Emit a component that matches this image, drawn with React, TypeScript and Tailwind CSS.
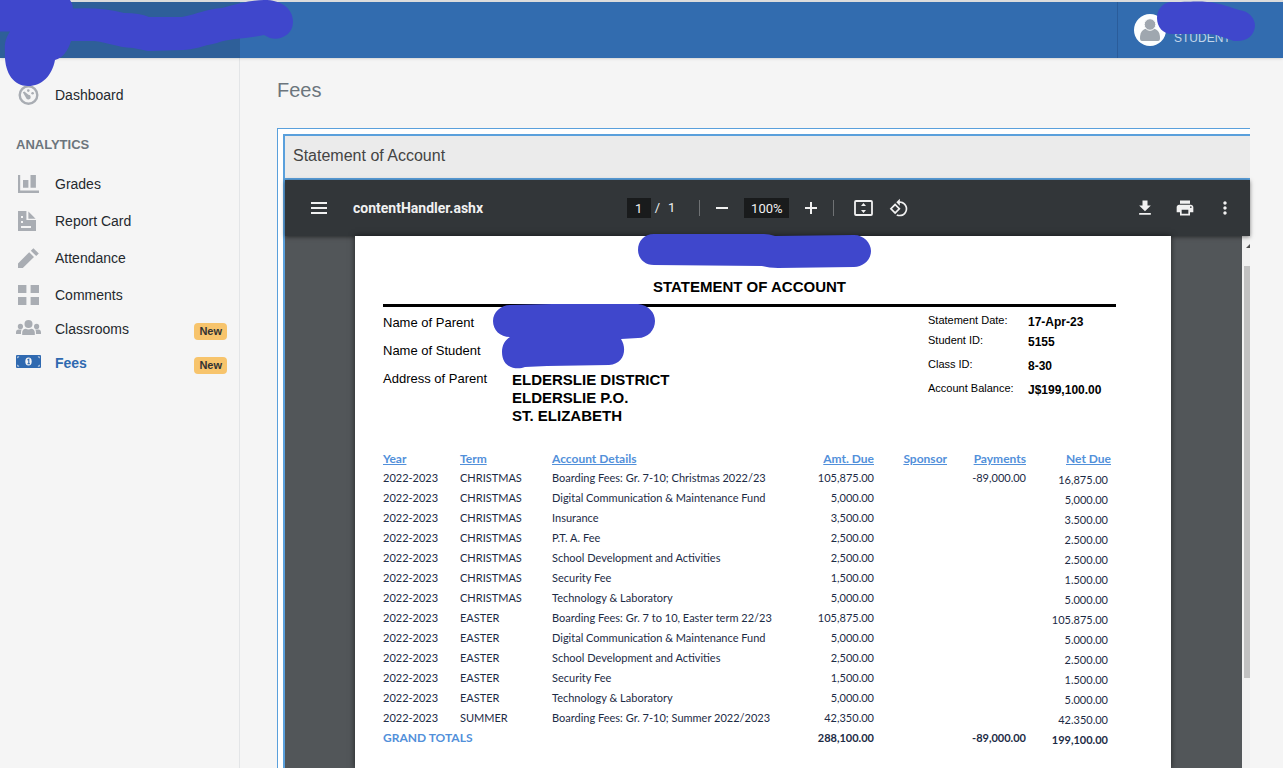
import type { ReactNode } from "react";

const navItems = [
  { label: "Grades", icon: <GradesIcon /> },
  { label: "Report Card", icon: <ReportIcon /> },
  { label: "Attendance", icon: <PencilIcon /> },
  { label: "Comments", icon: <GridIcon /> },
];

const fees = [
  ["2022-2023", "CHRISTMAS", "Boarding Fees: Gr. 7-10; Christmas 2022/23", "105,875.00", "-89,000.00", "16,875.00"],
  ["2022-2023", "CHRISTMAS", "Digital Communication & Maintenance Fund", "5,000.00", "", "5,000.00"],
  ["2022-2023", "CHRISTMAS", "Insurance", "3,500.00", "", "3.500.00"],
  ["2022-2023", "CHRISTMAS", "P.T. A. Fee", "2,500.00", "", "2.500.00"],
  ["2022-2023", "CHRISTMAS", "School Development and Activities", "2,500.00", "", "2.500.00"],
  ["2022-2023", "CHRISTMAS", "Security Fee", "1,500.00", "", "1.500.00"],
  ["2022-2023", "CHRISTMAS", "Technology & Laboratory", "5,000.00", "", "5.000.00"],
  ["2022-2023", "EASTER", "Boarding Fees: Gr. 7 to 10, Easter term 22/23", "105,875.00", "", "105.875.00"],
  ["2022-2023", "EASTER", "Digital Communication & Maintenance Fund", "5,000.00", "", "5.000.00"],
  ["2022-2023", "EASTER", "School Development and Activities", "2,500.00", "", "2.500.00"],
  ["2022-2023", "EASTER", "Security Fee", "1,500.00", "", "1.500.00"],
  ["2022-2023", "EASTER", "Technology & Laboratory", "5,000.00", "", "5.000.00"],
  ["2022-2023", "SUMMER", "Boarding Fees: Gr. 7-10; Summer 2022/2023", "42,350.00", "", "42.350.00"],
];

function DashboardIcon() {
  return (
    <svg width="21" height="20" viewBox="0 0 21 20" fill="#a9adb3">
      <circle cx="10.5" cy="10" r="8.8" fill="none" stroke="#a9adb3" strokeWidth="2.4" />
      <circle cx="10.3" cy="5.6" r="1.3" />
      <circle cx="14.6" cy="8.2" r="1.3" />
      <path d="M4.8 7.2l1.6-.8 4 3.400a2.400 2.400 0 1 1-2.400 3z" />
    </svg>
  );
}

function GradesIcon() {
  return (
    <svg width="21" height="18" viewBox="0 0 21 18" fill="#a9adb3">
      <path d="M0 0h2.2v15.6H21V18H0zM5 5h5.4v7.8H5zM12.5 0h5.4v12.8h-5.4z" />
    </svg>
  );
}

function ReportIcon() {
  return (
    <svg width="18" height="20" viewBox="0 0 18 20" fill="#a9adb3" fillRule="evenodd">
      <path d="M0 0h8.4v9H18v11H0zM3 5h2v2H3zM3 10h2v2H3zM3 15h10v2H3z" />
      <path d="M10.4.6L17.6 7.8h-7.2z" />
    </svg>
  );
}

function PencilIcon() {
  return (
    <svg width="21" height="20" viewBox="0 0 21 20" fill="#a9adb3">
      <path d="M0 20v-4.6L11.2 4.2l4.8 4.8L4.8 20zM12.8 2.8L15.4.2l5.4 5.2-2.6 2.6z" />
    </svg>
  );
}

function GridIcon() {
  return (
    <svg width="21" height="20" viewBox="0 0 21 20" fill="#a9adb3">
      <path d="M0 0h8.4v8H0zM12.6 0H21v8h-8.4zM0 12h8.4v8H0zM12.6 12H21v8h-8.4z" />
    </svg>
  );
}

function UsersIcon() {
  return (
    <svg width="25" height="15" viewBox="0 0 25 15" fill="#a9adb3">
      <circle cx="12.5" cy="4" r="4" />
      <circle cx="4.4" cy="6.4" r="2.6" />
      <circle cx="20.6" cy="6.4" r="2.6" />
      <path d="M6.2 15v-2.4c0-2.3 1.6-3.8 3.6-3.8 1.6 1 3.8 1 5.4 0 2 0 3.6 1.5 3.6 3.8V15z" />
      <path d="M0 14v-1.6c0-1.6 1-2.8 2.6-2.8h3.2C5 10.6 5 12 5 14zM25 14v-1.6c0-1.6-1-2.8-2.6-2.8h-3.2c.8 1 .8 2.400.8 4.400z" />
    </svg>
  );
}

function MoneyIcon() {
  return (
    <svg width="25" height="13" viewBox="0 0 25 13">
      <rect width="25" height="13" rx="1" fill="#2f69b0" />
      <path d="M1.4 1.4h2l-2 2zM23.6 1.4h-2l2 2zM1.4 11.6h2l-2-2zM23.6 11.6h-2l2-2z" fill="#f5f5f5" />
      <ellipse cx="12.5" cy="6.5" rx="3.2" ry="3.9" fill="#f5f5f5" />
      <path d="M11.4 5l1.400-.8v4.400M11.400 8.800h2.600" fill="none" stroke="#2f69b0" strokeWidth="1.1" />
    </svg>
  );
}

function NavRow({ icon, label, badge, active }: { icon: ReactNode; label: string; badge?: boolean; active?: boolean }) {
  return (
    <a href="#" className={`flex items-center pr-3 ${badge ? "h-[34px] pb-0.5 pl-4" : "h-[37px] pl-[18px]"}`}>
      <span className={badge ? "w-[39px] pb-1" : "w-[37px]"}>{icon}</span>
      <span className={`text-sm ${active ? "font-bold text-[#2f69b0]" : "text-[#24292e]"}`}>{label}</span>
      {badge && (
        <span className="mt-1 ml-auto rounded bg-[#f7c46c] px-[5px] text-[11px] leading-[17px] font-bold text-[#333]">New</span>
      )}
    </a>
  );
}

function Header() {
  return (
    <header className="relative z-20 flex h-[58px] border-t-2 border-[#dcdcdc] bg-[#326caf] shadow">
      <div className="w-60 bg-[#2e5f99]" />
      <svg className="absolute -top-0.5 left-0" width="300" height="88" viewBox="0 0 300 88" fill="#3f47cc">
        <path d="M0 0H70Q73 4 73 8.500Q103 7 124 13Q140 13 149 17H182C198 14 206 9 222 8C238 3 253 0 264 0C281 0 293 8 293 22C293 34 281 41 270 38L264 35C246 39 230 38 217 43C202 46 193 50 183 50L148 51L133 48C115 47 107 42 94 41H71Q66 57 55 60C52 76 42 86 28 86C13 86 4 72 5 52C4 42 7 36 10 31.500H0z" />
      </svg>
      <div className="ml-auto flex w-[166px] items-center border-l border-[#2a5c9a] pl-4">
        <svg width="32" height="32" viewBox="0 0 32 32">
          <circle cx="16" cy="16" r="16" fill="#fcfefe" />
          <path d="M6 24c0-5 2-8 5-9h10c3 1 5 4 5 9 0 2-.5 3-2 3H8c-1.500 0-2-1-2-3z" fill="#9fa7af" />
          <circle cx="16" cy="10.500" r="5.800" fill="#9fa7af" stroke="#fcfefe" />
        </svg>
        <span className="mt-4 ml-2 text-xs font-medium text-[#c3d5ea]">STUDENT</span>
      </div>
      <svg className="absolute -top-0.5 right-7" width="98" height="42" viewBox="0 0 98 42" fill="#3f47cc">
        <path d="M15 2C35 2 40 1 50 2C65 3 74 8 82 10C92 11 98 18 98 26C97 36 90 42 77 41L59 35C55 34 52 34 47 34H15C6 34 0 27 0 18C0 9 6 2 15 2z" />
      </svg>
    </header>
  );
}

function Sidebar() {
  return (
    <nav className="w-60 shrink-0 border-r border-[#e3e5e7] pt-[18px]">
      <NavRow icon={<DashboardIcon />} label="Dashboard" />
      <h2 className="mt-5 mb-2 pl-4 text-[13px] leading-6 font-bold text-[#6c757d]">ANALYTICS</h2>
      {navItems.map((item) => (
        <NavRow key={item.label} icon={item.icon} label={item.label} />
      ))}
      <NavRow icon={<UsersIcon />} label="Classrooms" badge />
      <NavRow icon={<MoneyIcon />} label="Fees" badge active />
    </nav>
  );
}

function PdfToolbar() {
  return (
    <div className="relative z-10 flex h-14 shrink-0 items-center bg-[#323639] font-[Roboto,sans-serif] text-sm text-[#f1f1f1] shadow-[0_1px_4px_rgba(0,0,0,0.5)]">
      <div className="flex flex-1 items-center gap-[26px] pl-[26px]">
        <button aria-label="Menu">
          <svg width="16" height="12" viewBox="0 0 16 12" fill="#f1f1f1">
            <path d="M0 0h16v2H0zM0 5h16v2H0zM0 10h16v2H0z" />
          </svg>
        </button>
        <span className="font-bold">contentHandler.ashx</span>
      </div>
      <div className="flex items-center pr-2.5 text-[13px]">
        <input aria-label="Page number" defaultValue="1" className="h-5 w-6 bg-[#191b1c] text-center" />
        <span className="ml-1">/</span>
        <span className="ml-2">1</span>
        <span className="ml-6 h-4 w-px bg-[#6f7274]" />
        <button aria-label="Zoom out" className="ml-4">
          <svg width="12" height="12" viewBox="0 0 12 12" fill="#f1f1f1">
            <path d="M0 5h12v2H0z" />
          </svg>
        </button>
        <input aria-label="Zoom" defaultValue="100%" className="ml-4 h-5 w-[45px] bg-[#191b1c] text-center" />
        <button aria-label="Zoom in" className="ml-4">
          <svg width="12" height="12" viewBox="0 0 12 12" fill="#f1f1f1">
            <path d="M5 0h2v5h5v2H7v5H5V7H0V5h5z" />
          </svg>
        </button>
        <span className="ml-4 h-4 w-px bg-[#6f7274]" />
        <button aria-label="Fit to page" className="ml-5">
          <svg width="19" height="16" viewBox="0 0 19 16" fill="#f1f1f1">
            <rect x="1" y="1" width="17" height="14" rx="1" fill="none" stroke="#f1f1f1" strokeWidth="1.8" />
            <path d="M9.500 3L12 6H7zM9.500 13L12 10H7z" />
          </svg>
        </button>
        <button aria-label="Rotate" className="ml-4">
          <svg width="20" height="20" viewBox="0 0 24 24" fill="#f1f1f1">
            <path d="M7.340 6.410L.860 12.900l6.490 6.480 6.490-6.480-6.500-6.490zM3.690 12.900l3.660-3.660L11 12.900l-3.660 3.660-3.650-3.660zm15.670-6.260C17.610 4.880 15.300 4 13 4V.760L8.760 5 13 9.240V6c1.790 0 3.580.680 4.950 2.050 2.730 2.730 2.730 7.170 0 9.900C16.580 19.320 14.790 20 13 20c-.970 0-1.940-.210-2.840-.610l-1.490 1.490C10.020 21.620 11.510 22 13 22c2.300 0 4.610-.880 6.360-2.640 3.520-3.510 3.520-9.210 0-12.720z" />
          </svg>
        </button>
      </div>
      <div className="flex flex-1 items-center justify-end gap-5 pr-[15px]">
        <button aria-label="Download">
          <svg width="20" height="20" viewBox="0 0 24 24" fill="#f1f1f1">
            <path d="M19 9h-4V3H9v6H5l7 7 7-7zM5 18v2h14v-2H5z" />
          </svg>
        </button>
        <button aria-label="Print">
          <svg width="20" height="20" viewBox="0 0 24 24" fill="#f1f1f1">
            <path d="M19 8H5c-1.660 0-3 1.340-3 3v6h4v4h12v-4h4v-6c0-1.660-1.340-3-3-3zm-3 11H8v-5h8v5zm3-7c-.550 0-1-.450-1-1s.450-1 1-1 1 .450 1 1-.450 1-1 1zm-1-9H6v4h12V3z" />
          </svg>
        </button>
        <button aria-label="More actions">
          <svg width="20" height="20" viewBox="0 0 24 24" fill="#f1f1f1">
            <path d="M12 8c1.100 0 2-.9 2-2s-.9-2-2-2-2 .9-2 2 .9 2 2 2zm0 2c-1.100 0-2 .9-2 2s.9 2 2 2 2-.9 2-2-.9-2-2-2zm0 6c-1.100 0-2 .9-2 2s.9 2 2 2 2-.9 2-2-.9-2-2-2z" />
          </svg>
        </button>
      </div>
    </div>
  );
}

function Heading({ children, className = "" }: { children?: ReactNode; className?: string }) {
  return (
    <th scope="col" className={`h-[19px] p-0 text-xs leading-4 font-bold text-[#5290da] underline ${className}`}>
      {children}
    </th>
  );
}

function StatementPage() {
  return (
    <div className="relative z-10 w-full max-w-[816px] shrink-0 bg-white pr-[55px] pl-7 text-black shadow-[0_0_6px_rgba(0,0,0,0.6)]">
      <h2 className="pt-10 text-center text-[15px] leading-[22px] font-bold">STATEMENT OF ACCOUNT</h2>
      <div className="relative mt-1.5 flex justify-between border-t-[3px] border-black">
        <svg className="absolute -top-[3px] left-[110px]" width="163" height="65" viewBox="0 0 163 65" fill="#3f47cc">
          <path d="M17 1Q80-1 145 0C156 1 162 9 162 17C162 26 155 34 145 34L128 35C134 44 132 60 116 61L54 62L32 63C25 66 9 65 9 48C9 41 12 36 17 33C7 33 0 26 0 17C0 8 8 1 17 1z" />
        </svg>
        <dl className="grid grid-cols-[129px_auto] content-start pt-0.5 text-[13px] leading-7">
          <dt>Name of Parent</dt>
          <dd />
          <dt>Name of Student</dt>
          <dd />
          <dt>Address of Parent</dt>
          <dd className="pt-1.5 text-[15px] leading-[18px] font-bold">
            ELDERSLIE DISTRICT
            <br />
            ELDERSLIE P.O.
            <br />
            ST. ELIZABETH
          </dd>
        </dl>
        <dl className="grid w-[188px] grid-cols-[100px_auto] grid-rows-[20px_24px_24px_24px] content-start pt-[3px] text-[11px] leading-5 [&>dd]:pt-0.5 [&>dd]:text-xs [&>dd]:leading-5 [&>dd]:font-bold">
          <dt>Statement Date:</dt>
          <dd>17-Apr-23</dd>
          <dt>Student ID:</dt>
          <dd>5155</dd>
          <dt>Class ID:</dt>
          <dd>8-30</dd>
          <dt>Account Balance:</dt>
          <dd>J$199,100.00</dd>
        </dl>
      </div>
      <table className="mt-6 w-full table-fixed border-collapse font-[Lato,sans-serif] text-[11px] leading-4 text-[#1c2b45]">
        <colgroup>
          <col className="w-[77px]" />
          <col className="w-[92px]" />
          <col />
          <col className="w-[90px]" />
          <col className="w-[73px]" />
          <col className="w-[79px]" />
          <col className="w-[90px]" />
        </colgroup>
        <thead>
          <tr>
            <Heading className="text-left">Year</Heading>
            <Heading className="text-left">Term</Heading>
            <Heading className="text-left">Account Details</Heading>
            <Heading className="text-right">Amt. Due</Heading>
            <Heading className="text-right">Sponsor</Heading>
            <Heading className="text-right">Payments</Heading>
            <Heading className="pr-[5px] text-right">Net Due</Heading>
          </tr>
        </thead>
        <tbody>
          {fees.map(([year, term, details, due, paid, net], i) => (
            <tr key={i} className="h-5">
              <td className="p-0">{year}</td>
              <td className="p-0">{term}</td>
              <td className="p-0 whitespace-nowrap">{details}</td>
              <td className="p-0 text-right">{due}</td>
              <td className="p-0" />
              <td className="p-0 text-right">{paid}</td>
              <td className="pt-1 pr-2 text-right">{net}</td>
            </tr>
          ))}
        </tbody>
        <tfoot>
          <tr className="h-5 font-bold">
            <th scope="row" colSpan={3} className="p-0 text-left text-xs leading-4 text-[#5290da]">
              GRAND TOTALS
            </th>
            <td className="p-0 text-right">288,100.00</td>
            <td className="p-0" />
            <td className="p-0 text-right">-89,000.00</td>
            <td className="pt-1 pr-2 text-right">199,100.00</td>
          </tr>
        </tfoot>
      </table>
      <svg className="absolute -top-[3px] left-[283px]" width="233" height="36" viewBox="0 0 233 36" fill="#3f47cc">
        <path d="M16 1H126Q131 1 137 3L216 2C226 2 233 10 233 18C233 27 225 34 216 34L140 35Q131 35 124 33L16 32C6 32 0 25 0 17C0 8 6 1 16 1z" />
      </svg>
    </div>
  );
}

export default function App() {
  return (
    <div className="flex h-screen flex-col overflow-hidden bg-[#f5f5f5] font-['Liberation_Sans',Arial,sans-serif]">
      <Header />
      <div className="flex min-h-0 flex-1">
        <Sidebar />
        <main className="flex min-w-0 flex-1 flex-col pr-[33px] pl-[37px]">
          <h1 className="pt-4 text-xl leading-8 text-[#6c757d]">Fees</h1>
          <section className="mt-[22px] flex min-h-0 flex-1 flex-col border-t border-l border-[#5aa0dc] bg-white pt-[5px] pl-[5px]">
            <div className="flex min-h-0 flex-1 flex-col border-t-2 border-l-2 border-[#5aa0dc]">
              <h2 className="border-b-2 border-[#5aa0dc] bg-[#ebebeb] px-2 pt-1 pb-1.5 leading-8 text-[#444]">Statement of Account</h2>
              <PdfToolbar />
              <div className="flex min-h-0 flex-1 bg-[#525659]">
                <div className="flex min-w-0 flex-1 justify-center pr-px">
                  <StatementPage />
                </div>
                <div className="flex w-2 flex-col bg-[#f1f1f1] pl-0.5">
                  <svg className="mt-2 ml-auto shrink-0" width="4" height="4" viewBox="0 0 4 4" fill="#505050">
                    <path d="M0 4L4 0v4z" />
                  </svg>
                  <div className="mt-[18px] h-[412px] bg-[#c1c1c1]" />
                </div>
              </div>
            </div>
          </section>
        </main>
      </div>
    </div>
  );
}
